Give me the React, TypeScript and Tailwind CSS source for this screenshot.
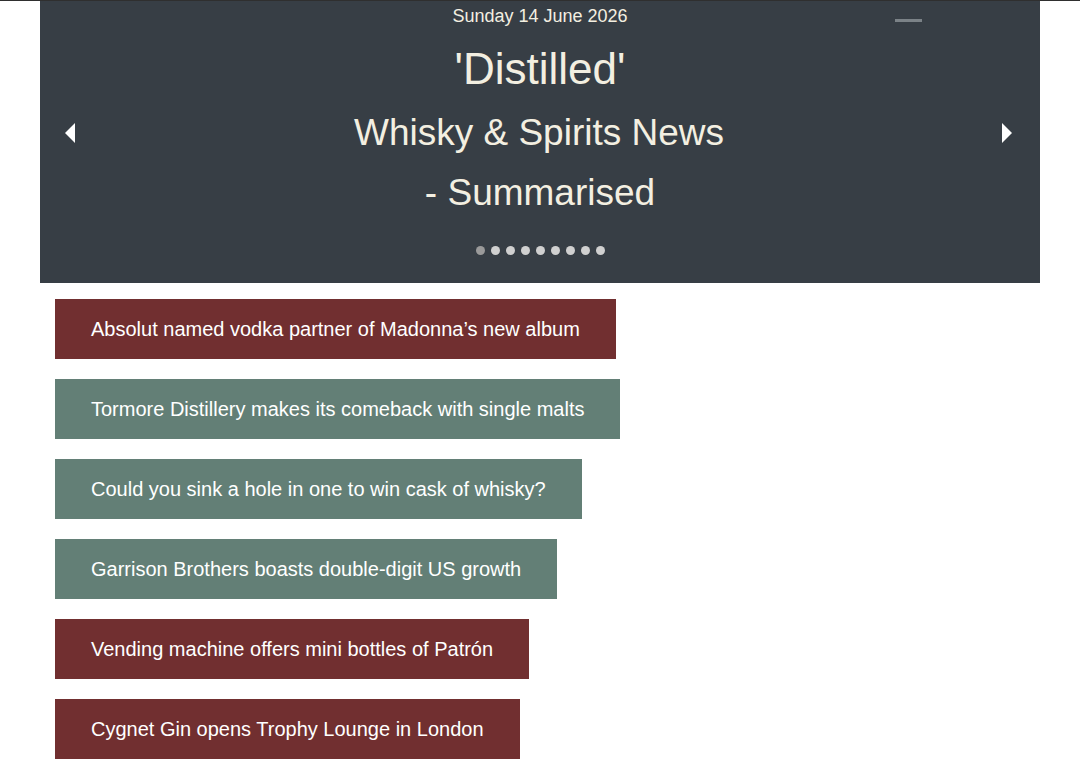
const headlines: { title: string; tone: "red" | "green" }[] = [
  { title: "Absolut named vodka partner of Madonna’s new album", tone: "red" },
  { title: "Tormore Distillery makes its comeback with single malts", tone: "green" },
  { title: "Could you sink a hole in one to win cask of whisky?", tone: "green" },
  { title: "Garrison Brothers boasts double-digit US growth", tone: "green" },
  { title: "Vending machine offers mini bottles of Patrón", tone: "red" },
  { title: "Cygnet Gin opens Trophy Lounge in London", tone: "red" },
];

const toneClasses = {
  red: "bg-[#712f30]",
  green: "bg-[#637f76]",
};

function Arrow({ dir }: { dir: "left" | "right" }) {
  return (
    <svg width="12" height="20" viewBox="0 0 12 20" className="shrink-0">
      {dir === "left" ? (
        <polygon points="10,0 10,20 0,10" fill="#ffffff" />
      ) : (
        <polygon points="1,0 1,20 11,10" fill="#ffffff" />
      )}
    </svg>
  );
}

function Hero() {
  return (
    <div className="relative mx-[40px] bg-[#373e45] text-[#f3efe1] h-[282px] flex flex-col items-center">
      <div className="absolute right-[118px] top-[18px] w-[27px] h-[3px] bg-[#7b8287]" />
      <div className="text-[18px] leading-[30px]">Sunday 14 June 2026</div>
      <div className="mt-[10px] text-[44px] leading-[56px]">'Distilled'</div>
      <div className="mt-[6px] flex w-full items-center justify-between pl-[25px] pr-[27px]">
        <Arrow dir="left" />
        <div className="text-[37px] leading-[60px] text-center">Whisky &amp; Spirits News</div>
        <Arrow dir="right" />
      </div>
      <div className="text-[37px] leading-[60px]">- Summarised</div>
      <div className="mt-[23px] flex gap-[6px]">
        {Array.from({ length: 9 }).map((_, i) => (
          <span
            key={i}
            className={`w-[9px] h-[9px] rounded-full ${i === 0 ? "bg-[#9a9a9a]" : "bg-[#d0d0d0]"}`}
          />
        ))}
      </div>
    </div>
  );
}

export default function App() {
  return (
    <div className="min-h-screen bg-white border-t border-[#2f2f2f] font-['Liberation_Sans',Arial,sans-serif]">
      <Hero />
      <div className="px-[55px] pt-[16px] flex flex-col items-start gap-[20px]">
        {headlines.map((h) => (
          <div
            key={h.title}
            className={`${toneClasses[h.tone]} h-[60px] px-[36px] pb-px flex items-center text-white text-[20px]`}
          >
            {h.title}
          </div>
        ))}
      </div>
    </div>
  );
}
